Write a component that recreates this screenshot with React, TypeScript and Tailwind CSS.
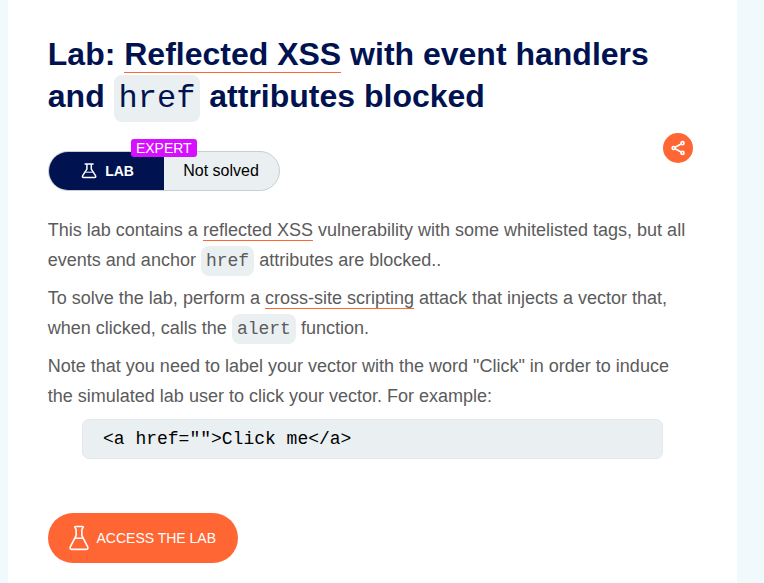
import type { ReactNode } from 'react';

function TextLink({ children }: { children: ReactNode }) {
  return (
    <a href="#" className="border-b border-[#ff6633]">
      {children}
    </a>
  );
}

function Code({ children }: { children: ReactNode }) {
  return (
    <code className="rounded-[8px] bg-[#eaeff2] p-[5px] font-['Liberation_Mono',monospace] leading-none font-normal">
      {children}
    </code>
  );
}

function SmallFlask() {
  return (
    <svg width="16" height="16" viewBox="0 0 16 16" fill="none" stroke="white" strokeWidth="1.5" strokeLinejoin="round">
      <path d="M3.6 1H12.6M5.9 1V6.2L1.7 12.6Q.9 14.5 2.6 14.5H13.6Q15.3 14.5 14.5 12.6L10.3 6.2V1" />
      <path d="M4.4 9.2H11.8" strokeWidth="1" />
    </svg>
  );
}

function LargeFlask() {
  return (
    <svg width="20" height="26" viewBox="0 0 20 26" fill="none" stroke="white" strokeWidth="1.6" strokeLinejoin="round">
      <path d="M6.6 1.5H13.4Q14.5 1.5 14.2 2.4L12.9 4.4V10.6L18.7 21.8Q19.5 24.4 17.4 24.4H2.6Q.5 24.4 1.3 21.8L7.1 10.6V4.4L5.8 2.4Q5.5 1.5 6.6 1.5ZM5.7 13.3H14.3" />
    </svg>
  );
}

export default function App() {
  return (
    <div className="h-[583px] overflow-hidden bg-[#f0f9fb] pl-2 font-['Liberation_Sans',Arial,sans-serif]">
      <main className="h-full w-[729px] bg-white pt-[33px] pr-10 pl-[39.8px]">
        <h1 className="text-[32px] leading-[42px] font-bold text-[#001350]">
          Lab: <TextLink>Reflected XSS</TextLink> with event handlers
          <br />
          and <Code>href</Code> attributes blocked
        </h1>

        <div className="mt-4 flex items-start justify-between pr-1">
          <div className="relative mt-[18px] flex h-10 w-[232px] overflow-visible rounded-full border border-[#c8cfd2] bg-[#eaeff2]">
            <div className="flex w-[115px] items-center gap-2 rounded-l-full bg-[#001350] pl-[32.4px] text-[14px] font-bold text-white">
              <SmallFlask />
              <span>LAB</span>
            </div>
            <div className="flex flex-1 items-center pl-[19.4px] text-[16px] text-black">Not solved</div>
            <span className="absolute top-[-13px] left-[82px] h-[18px] w-[66px] rounded-[3px] bg-[#d60fff] text-center text-[14px] leading-[18px] text-white">
              EXPERT
            </span>
          </div>
          <button className="flex size-[30px] items-center justify-center rounded-full bg-[#ff6633]" aria-label="Share">
            <svg width="14" height="16" viewBox="0 0 14 16" fill="none" stroke="white" strokeWidth="1.7">
              <circle cx="2.7" cy="8" r="1.5" />
              <circle cx="11.5" cy="3.2" r="1.5" />
              <circle cx="11.5" cy="12.9" r="1.5" />
              <path d="M4.1 7.2L10.1 4M4.1 8.8L10.1 12.1" />
            </svg>
          </button>
        </div>

        <div className="mt-6 space-y-2 text-[18px] leading-[30px] text-[#5b5b5b]">
          <p>
            This lab contains a <TextLink>reflected XSS</TextLink> vulnerability with some whitelisted tags, but all
            <br />
            events and anchor <Code>href</Code> attributes are blocked..
          </p>
          <p>
            To solve the lab, perform a <TextLink>cross-site scripting</TextLink> attack that injects a vector that,
            <br />
            when clicked, calls the <Code>alert</Code> function.
          </p>
          <p>
            Note that you need to label your vector with the word "Click" in order to induce
            <br />
            the simulated lab user to click your vector. For example:
          </p>
        </div>

        <pre className="mt-2 ml-[34.2px] flex h-10 w-[581px] items-center rounded-[7px] border border-[#e3e8eb] bg-[#eaeff2] pl-5 font-['Liberation_Mono',monospace] text-[18px] text-black">
          {'<a href="">Click me</a>'}
        </pre>

        <a href="#" className="mt-[54px] flex h-[50px] w-[190px] items-center gap-[7px] rounded-full bg-[#ff6633] pl-[21.7px] text-[14px] text-white">
          <LargeFlask />
          <span>ACCESS THE LAB</span>
        </a>
      </main>
    </div>
  );
}
